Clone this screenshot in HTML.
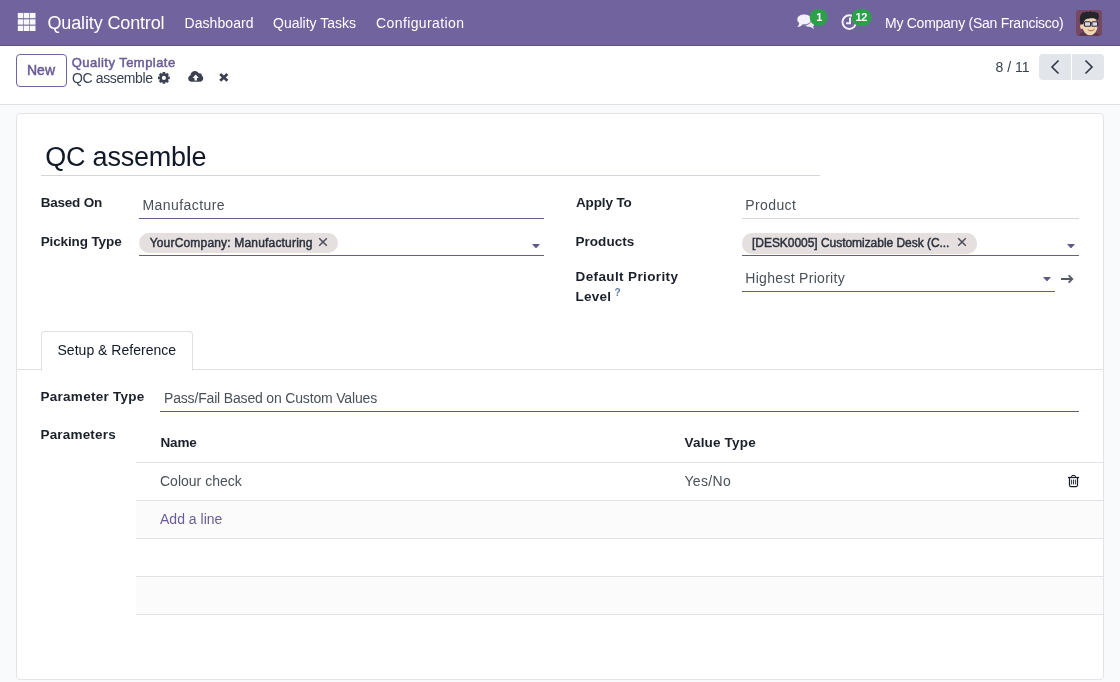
<!DOCTYPE html>
<html><head><meta charset="utf-8"><title>Odoo - QC assemble</title>
<style>
html,body{margin:0;padding:0}
body{width:1120px;height:682px;overflow:hidden;position:relative;background:#f9fafb;font-family:"Liberation Sans",sans-serif;}
.t{position:absolute;white-space:nowrap;line-height:20px;font-family:"Liberation Sans",sans-serif;}
.abs{position:absolute}
.nav{left:0;top:0;width:1120px;height:45px;background:#71639e;border-bottom:1px solid #5d5287}
.cp{left:0;top:46px;width:1120px;height:58px;background:#fff;border-bottom:1px solid #dfe1e4}
.sheet{left:16px;top:113px;width:1086px;height:565px;background:#fff;border:1px solid #e2e4e7;border-radius:4px}
.ul{position:absolute;height:1px}
.pill{position:absolute;background:#e5dfdf;border-radius:10px}
.hl{position:absolute;height:1px;background:#e1e3e6;left:136px;width:967px}
.stripe{position:absolute;left:136px;width:967px;height:37px;background:#fbfbfb}
#root{position:absolute;left:0;top:0;width:1120px;height:682px;will-change:transform;}
</style></head><body><div id="root">

<div class="abs nav"></div>
<svg class="abs" style="left:17px;top:12px" width="20" height="20" viewBox="17 12 20 20"><rect x="17.80" y="12.90" width="5.5" height="5.3" fill="#fff" fill-opacity=".95"/><rect x="23.90" y="12.90" width="5.5" height="5.3" fill="#fff" fill-opacity=".95"/><rect x="30.00" y="12.90" width="5.5" height="5.3" fill="#fff" fill-opacity=".95"/><rect x="17.80" y="19.30" width="5.5" height="5.3" fill="#fff" fill-opacity=".95"/><rect x="23.90" y="19.30" width="5.5" height="5.3" fill="#fff" fill-opacity=".95"/><rect x="30.00" y="19.30" width="5.5" height="5.3" fill="#fff" fill-opacity=".95"/><rect x="17.80" y="25.70" width="5.5" height="5.3" fill="#fff" fill-opacity=".95"/><rect x="23.90" y="25.70" width="5.5" height="5.3" fill="#fff" fill-opacity=".95"/><rect x="30.00" y="25.70" width="5.5" height="5.3" fill="#fff" fill-opacity=".95"/></svg>
<span id="brand" class="t" style="left:47.50px;top:12.76px;font-size:18px;font-weight:400;color:#fff;letter-spacing:-0.14px;">Quality Control</span>
<span id="m1" class="t" style="left:184.50px;top:13.15px;font-size:14px;font-weight:400;color:#fff;letter-spacing:0.07px;">Dashboard</span>
<span id="m2" class="t" style="left:273.00px;top:13.15px;font-size:14px;font-weight:400;color:#fff;letter-spacing:0px;">Quality Tasks</span>
<span id="m3" class="t" style="left:376.00px;top:13.15px;font-size:14px;font-weight:400;color:#fff;letter-spacing:0.4px;">Configuration</span>
<span id="comp" class="t" style="left:885.00px;top:13.15px;font-size:14px;font-weight:400;color:#fff;letter-spacing:-0.26px;">My Company (San Francisco)</span>

<svg class="abs" style="left:790px;top:4px" width="90" height="36" viewBox="790 4 90 36">
 <!-- back bubble -->
 <path d="M806.5 24.2 C808 26.6 812.5 27.2 814.3 29.6 C813.2 28 813 26.6 813.6 25.6 C814.6 24.2 814.6 21.6 812 20.4 Z" fill="#e9e6f2"/>
 <ellipse cx="809.6" cy="23.4" rx="4.6" ry="3.4" fill="#e9e6f2"/>
 <!-- front bubble -->
 <ellipse cx="804.2" cy="19.4" rx="7.4" ry="5.5" fill="#f3f1f8" stroke="#71639e" stroke-width="0.9"/>
 <path d="M799.2 22.6 C799.2 24.6 798.4 26 797.2 27 C799.8 26.8 801.6 25.8 802.8 24.2 Z" fill="#f3f1f8"/>
 <!-- badge 1 -->
 <rect x="809.7" y="8.7" width="17.9" height="17.4" rx="8.7" fill="#2aa148"/>
 <!-- clock -->
 <circle cx="849.3" cy="22.1" r="6.8" fill="none" stroke="#f3f1f8" stroke-width="2"/>
 <path d="M850 17.4 V23.3 H846" fill="none" stroke="#f3f1f8" stroke-width="1.9"/>
 <rect x="851.5" y="8.7" width="20.1" height="17.4" rx="8.7" fill="#2aa148"/>
</svg>


<svg class="abs" style="left:1076px;top:10px" width="26" height="26" viewBox="0 0 26 26">
 <defs><clipPath id="av"><rect width="26" height="26" rx="3"/></clipPath></defs>
 <g clip-path="url(#av)">
  <rect width="26" height="26" fill="#774860"/>
  <path d="M3 26 C4 22 8 21 13 21 C18 21 22 22 23 26 Z" fill="#5a3850"/>
  <ellipse cx="14" cy="15.8" rx="7.6" ry="9.4" fill="#f2d6b4"/>
  <ellipse cx="5.8" cy="16.4" rx="1.7" ry="2.6" fill="#f0d2b0"/>
  <path d="M4.6 14.5 C3 9 4 5 6 3.2 L7.5 2 L9 2.6 L10.5 1.2 L12.5 2.2 L14.5 1 L16.5 2.2 L18.5 1.4 L19.8 2.8 L21.6 2.6 C23.6 5 23 8 22 10.2 C20 8.4 17.5 8 13.5 8.4 C10 8.7 8 9.4 7.4 14.2 Z" fill="#24242c"/>
  <rect x="8.4" y="11.8" width="6.2" height="4.4" rx="1" fill="#d9d6e2" stroke="#2b2b38" stroke-width="1.1"/>
  <rect x="15.9" y="11.8" width="5.7" height="4.4" rx="1" fill="#d9d6e2" stroke="#2b2b38" stroke-width="1.1"/>
  <path d="M14.6 13.2 H16" stroke="#2b2b38" stroke-width="1.1"/>
  <path d="M11.8 19.6 C13.6 21.4 16.8 21.2 18.4 19.2" fill="none" stroke="#a8644e" stroke-width="1"/>
 </g>
</svg>

<span id="b1" class="t" style="left:816.30px;top:7.09px;font-size:11px;font-weight:700;color:#fff;letter-spacing:0px;">1</span>
<span id="b2" class="t" style="left:855.40px;top:7.09px;font-size:11px;font-weight:700;color:#fff;letter-spacing:-0.3px;">12</span>
<div class="abs cp"></div>
<div class="abs" style="left:16px;top:54px;width:49px;height:31px;border:1px solid #71639e;border-radius:4px;background:#fff"></div>
<span id="new" class="t" style="left:27.00px;top:59.65px;font-size:14px;font-weight:400;color:#6a5c96;letter-spacing:0.0px;-webkit-text-stroke:0.5px #6a5c96;">New</span>
<span id="bc1" class="t" style="left:71.70px;top:52.50px;font-size:13px;font-weight:400;color:#6a5c96;letter-spacing:0.46px;-webkit-text-stroke:0.5px #6a5c96;">Quality Template</span>
<span id="bc2" class="t" style="left:72.00px;top:68.15px;font-size:14px;font-weight:400;color:#374151;letter-spacing:-0.38px;">QC assemble</span>
<svg class="abs" style="left:0;top:0" width="1120" height="110" viewBox="0 0 1120 110"><path d="M168.16 76.44 L169.76 76.62 L169.76 79.18 L168.16 79.36 L167.94 79.88 L168.95 81.14 L167.14 82.95 L165.88 81.94 L165.36 82.16 L165.18 83.76 L162.62 83.76 L162.44 82.16 L161.92 81.94 L160.66 82.95 L158.85 81.14 L159.86 79.88 L159.64 79.36 L158.04 79.18 L158.04 76.62 L159.64 76.44 L159.86 75.92 L158.85 74.66 L160.66 72.85 L161.92 73.86 L162.44 73.64 L162.62 72.04 L165.18 72.04 L165.36 73.64 L165.88 73.86 L167.14 72.85 L168.95 74.66 L167.94 75.92 Z M165.95 77.90 A2.05 2.05 0 1 0 161.85 77.90 A2.05 2.05 0 1 0 165.95 77.90 Z" fill="#3b4150" fill-rule="evenodd"/></svg>
<svg class="abs" style="left:186px;top:68px" width="48" height="18" viewBox="186 68 48 18">
 <path d="M191.6 81.7 C189.6 81.7 188.2 80.2 188.2 78.4 C188.2 76.9 189.2 75.7 190.5 75.3 C190.5 72.9 192.5 71.1 194.9 71.1 C196.7 71.1 198.2 72.1 198.9 73.6 C199.4 73.3 199.9 73.2 200.4 73.4 C201.5 73.7 202.1 74.7 201.9 75.8 C202.7 76.3 203.2 77.3 203.2 78.4 C203.2 80.2 201.8 81.7 199.9 81.7 Z" fill="#3b4150"/>
 <path d="M195.7 74.6 L198.8 78 H196.9 V80.4 H194.5 V78 H192.6 Z" fill="#fff"/>
 <path d="M220.2 74.1 L227.4 80.8 M227.4 74.1 L220.2 80.8" stroke="#3b4150" stroke-width="2.7" fill="none"/>
</svg>
<span id="pager" class="t" style="left:995.50px;top:56.75px;font-size:14px;font-weight:400;color:#374151;letter-spacing:0.01px;">8 / 11</span>
<div class="abs" style="left:1039px;top:54px;width:32px;height:26px;background:#e2e5e9;border-radius:4px 0 0 4px"></div>
<div class="abs" style="left:1072px;top:54px;width:32px;height:26px;background:#e2e5e9;border-radius:0 4px 4px 0"></div>
<svg class="abs" style="left:1039px;top:54px" width="65" height="26" viewBox="0 0 65 26" fill="none" stroke="#2f3646" stroke-width="1.6"><path d="M19.5 6.5 L13 13 L19.5 19.5"/><path d="M46.5 6.5 L53 13 L46.5 19.5"/></svg>
<div class="abs sheet"></div>
<span id="title" class="t" style="left:45.30px;top:146.64px;font-size:27px;font-weight:400;color:#111827;letter-spacing:-0.23px;">QC assemble</span>
<div class="ul" style="left:41px;top:175px;width:779px;background:#d3d6da"></div>
<span id="l1" class="t" style="left:40.70px;top:192.82px;font-size:13.5px;font-weight:700;color:#1b202b;letter-spacing:-0.22px;">Based On</span>
<span id="l2" class="t" style="left:40.70px;top:231.82px;font-size:13.5px;font-weight:700;color:#1b202b;letter-spacing:-0.12px;">Picking Type</span>
<span id="l3" class="t" style="left:576.00px;top:193.32px;font-size:13.5px;font-weight:700;color:#1b202b;letter-spacing:-0.14px;">Apply To</span>
<span id="l4" class="t" style="left:575.50px;top:232.07px;font-size:13.5px;font-weight:700;color:#1b202b;letter-spacing:0.04px;">Products</span>
<span id="l5" class="t" style="left:575.50px;top:266.57px;font-size:13.5px;font-weight:700;color:#1b202b;letter-spacing:0.38px;">Default Priority</span>
<span id="l6" class="t" style="left:575.40px;top:287.32px;font-size:13.5px;font-weight:700;color:#1b202b;letter-spacing:0.28px;">Level</span>
<span id="q" class="t" style="left:614.60px;top:282.94px;font-size:10px;font-weight:700;color:#5b7fa3;letter-spacing:0px;">?</span>
<span id="v1" class="t" style="left:142.40px;top:194.85px;font-size:14px;font-weight:400;color:#495057;letter-spacing:0.44px;">Manufacture</span>
<span id="v2" class="t" style="left:745.30px;top:194.85px;font-size:14px;font-weight:400;color:#495057;letter-spacing:0.38px;">Product</span>
<span id="v3" class="t" style="left:745.30px;top:267.85px;font-size:14px;font-weight:400;color:#495057;letter-spacing:0.3px;">Highest Priority</span>
<div class="ul" style="left:139px;top:218px;width:405px;background:#665e8a"></div>
<div class="ul" style="left:139px;top:255px;width:405px;background:#665e8a"></div>
<div class="ul" style="left:742px;top:218px;width:337px;background:#d3d6da"></div>
<div class="ul" style="left:742px;top:255px;width:337px;background:#665e8a"></div>
<div class="ul" style="left:742px;top:291px;width:313px;background:#665e8a"></div>
<div class="pill" style="left:139px;top:233px;width:199px;height:20px"></div>
<span id="p1" class="t" style="left:149.70px;top:232.84px;font-size:12px;font-weight:400;color:#2b303b;letter-spacing:0.18px;-webkit-text-stroke:0.45px #2b303b;">YourCompany: Manufacturing</span>
<div class="pill" style="left:742px;top:233px;width:235px;height:21px"></div>
<span id="p2" class="t" style="left:752.00px;top:232.84px;font-size:12px;font-weight:400;color:#2b303b;letter-spacing:-0.04px;-webkit-text-stroke:0.45px #2b303b;">[DESK0005] Customizable Desk (C...</span>
<svg class="abs" style="left:318px;top:237px" width="10" height="10" viewBox="0 0 10 10" stroke="#4a4d57" stroke-width="1.45"><path d="M1.2 1.2 L8.8 8.8 M8.8 1.2 L1.2 8.8"/></svg>
<svg class="abs" style="left:957px;top:237px" width="10" height="10" viewBox="0 0 10 10" stroke="#4a4d57" stroke-width="1.45"><path d="M1.2 1.2 L8.8 8.8 M8.8 1.2 L1.2 8.8"/></svg>
<svg class="abs" style="left:532px;top:243.5px" width="8" height="4.5" viewBox="0 0 8 4.5"><path d="M0 0 H8 L4 4.5 Z" fill="#5f5787"/></svg>
<svg class="abs" style="left:1066.7px;top:243.5px" width="8" height="4.5" viewBox="0 0 8 4.5"><path d="M0 0 H8 L4 4.5 Z" fill="#5f5787"/></svg>
<svg class="abs" style="left:1043px;top:276.5px" width="8" height="4.5" viewBox="0 0 8 4.5"><path d="M0 0 H8 L4 4.5 Z" fill="#5f5787"/></svg>
<svg class="abs" style="left:1060px;top:273px" width="14" height="12" viewBox="0 0 14 12" fill="none" stroke="#555b66" stroke-width="1.8"><path d="M1 6 H12.3 M8.6 2.3 L12.3 6 L8.6 9.7"/></svg>
<div class="ul" style="left:17px;top:369px;width:1086px;background:#dee0e3"></div>
<div class="abs" style="left:41px;top:331px;width:150px;height:38px;border:1px solid #dee0e3;border-bottom:1px solid #fff;border-radius:4px 4px 0 0;background:#fff"></div>
<span id="tab" class="t" style="left:57.50px;top:340.15px;font-size:14px;font-weight:400;color:#111827;letter-spacing:0.02px;">Setup &amp; Reference</span>
<span id="l7" class="t" style="left:40.50px;top:386.57px;font-size:13.5px;font-weight:700;color:#1b202b;letter-spacing:0.27px;">Parameter Type</span>
<span id="v4" class="t" style="left:164.00px;top:388.15px;font-size:14px;font-weight:400;color:#495057;letter-spacing:-0.17px;">Pass/Fail Based on Custom Values</span>
<div class="ul" style="left:160px;top:411px;width:919px;background:#625c80"></div>
<span id="l8" class="t" style="left:40.50px;top:425.32px;font-size:13.5px;font-weight:700;color:#1b202b;letter-spacing:0.18px;">Parameters</span>
<div class="stripe" style="top:501px"></div><div class="stripe" style="top:577px"></div>
<div class="hl" style="top:462px"></div>
<div class="hl" style="top:500px"></div>
<div class="hl" style="top:538px"></div>
<div class="hl" style="top:576px"></div>
<div class="hl" style="top:614px"></div>
<span id="h1" class="t" style="left:160.50px;top:433.32px;font-size:13.5px;font-weight:700;color:#1b202b;letter-spacing:-0.18px;">Name</span>
<span id="h2" class="t" style="left:684.50px;top:433.32px;font-size:13.5px;font-weight:700;color:#1b202b;letter-spacing:0.18px;">Value Type</span>
<span id="c1" class="t" style="left:160.00px;top:471.35px;font-size:14px;font-weight:400;color:#495057;letter-spacing:0.0px;">Colour check</span>
<span id="c2" class="t" style="left:684.50px;top:471.15px;font-size:14px;font-weight:400;color:#495057;letter-spacing:0.32px;">Yes/No</span>
<span id="add" class="t" style="left:160.00px;top:509.25px;font-size:14px;font-weight:400;color:#6b5c99;letter-spacing:0.01px;">Add a line</span>

<svg class="abs" style="left:1066px;top:473px" width="15" height="16" viewBox="1066 473 15 16" fill="none" stroke="#1b1f2a">
 <path d="M1067.9 477.5 H1079.1" stroke-width="1.25"/>
 <path d="M1071.3 477.3 L1072 475.5 H1075 L1075.7 477.3" stroke-width="1"/>
 <path d="M1069.5 478 V485.3 Q1069.5 486.5 1070.7 486.5 H1076.3 Q1077.5 486.5 1077.5 485.3 V478" stroke-width="1.25"/>
 <path d="M1071.6 479.6 V484.4 M1073.5 479.6 V484.4 M1075.4 479.6 V484.4" stroke-width="0.9"/>
</svg>
</div></body></html>
